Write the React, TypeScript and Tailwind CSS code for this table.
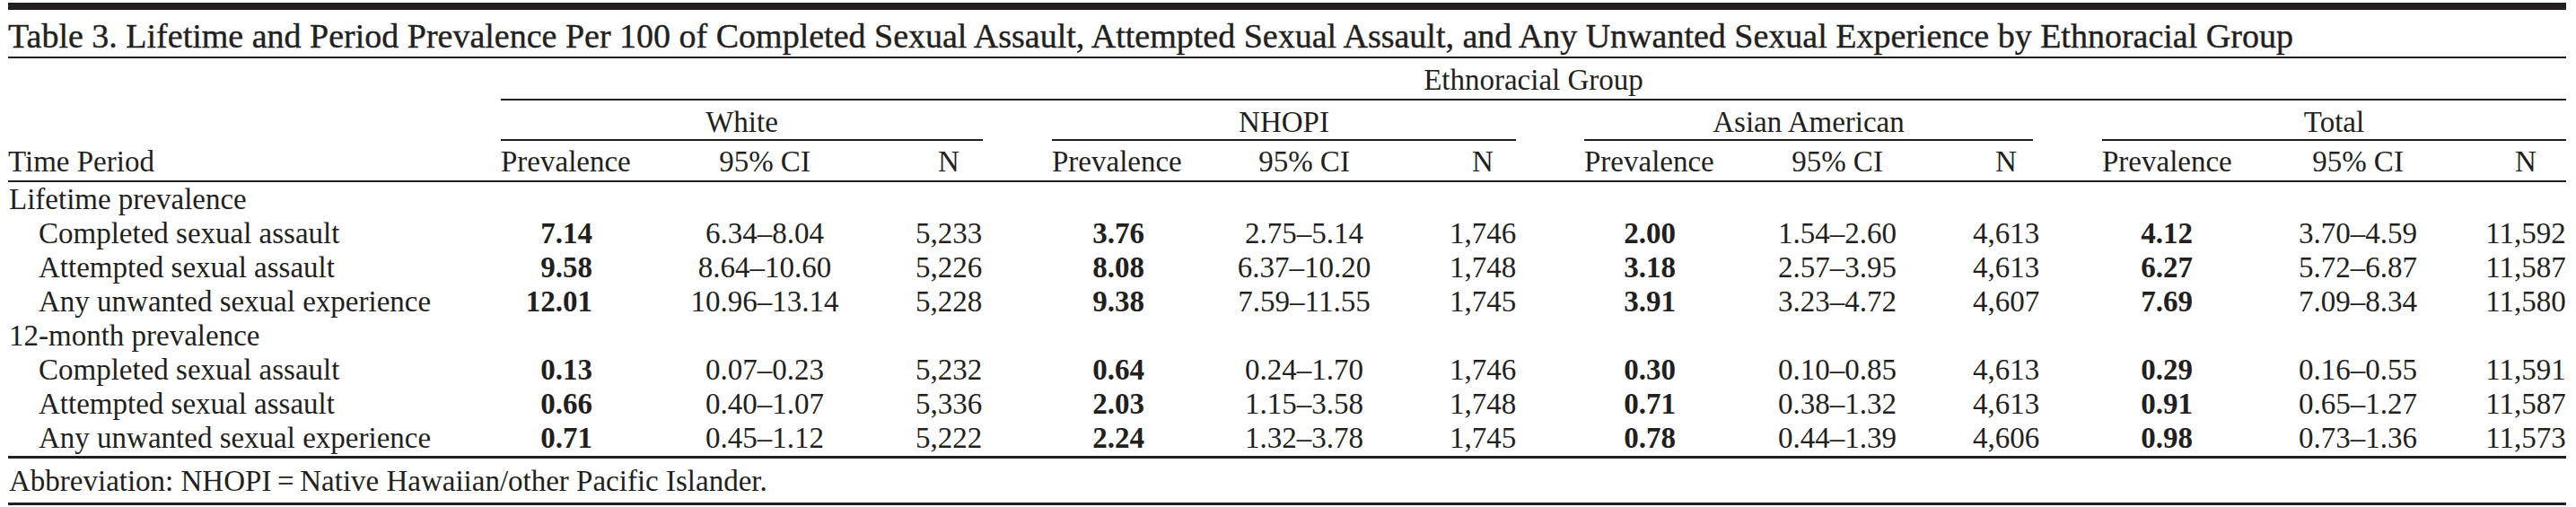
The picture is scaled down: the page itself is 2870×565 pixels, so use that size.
import React from "react";

type Triple = [string, string, string];
type Row = { label: string; section?: boolean; v?: Triple[] };

const rows: Row[] = [
  { label: "Lifetime prevalence", section: true },
  {
    label: "Completed sexual assault",
    v: [
      ["7.14", "6.34–8.04", "5,233"],
      ["3.76", "2.75–5.14", "1,746"],
      ["2.00", "1.54–2.60", "4,613"],
      ["4.12", "3.70–4.59", "11,592"],
    ],
  },
  {
    label: "Attempted sexual assault",
    v: [
      ["9.58", "8.64–10.60", "5,226"],
      ["8.08", "6.37–10.20", "1,748"],
      ["3.18", "2.57–3.95", "4,613"],
      ["6.27", "5.72–6.87", "11,587"],
    ],
  },
  {
    label: "Any unwanted sexual experience",
    v: [
      ["12.01", "10.96–13.14", "5,228"],
      ["9.38", "7.59–11.55", "1,745"],
      ["3.91", "3.23–4.72", "4,607"],
      ["7.69", "7.09–8.34", "11,580"],
    ],
  },
  { label: "12-month prevalence", section: true },
  {
    label: "Completed sexual assault",
    v: [
      ["0.13", "0.07–0.23", "5,232"],
      ["0.64", "0.24–1.70", "1,746"],
      ["0.30", "0.10–0.85", "4,613"],
      ["0.29", "0.16–0.55", "11,591"],
    ],
  },
  {
    label: "Attempted sexual assault",
    v: [
      ["0.66", "0.40–1.07", "5,336"],
      ["2.03", "1.15–3.58", "1,748"],
      ["0.71", "0.38–1.32", "4,613"],
      ["0.91", "0.65–1.27", "11,587"],
    ],
  },
  {
    label: "Any unwanted sexual experience",
    v: [
      ["0.71", "0.45–1.12", "5,222"],
      ["2.24", "1.32–3.78", "1,745"],
      ["0.78", "0.44–1.39", "4,606"],
      ["0.98", "0.73–1.36", "11,573"],
    ],
  },
];

const groups = ["White", "NHOPI", "Asian American", "Total"];
const prevPad = ["pr-[25px]", "pr-[16px]", "pr-[22px]", "pr-[42px]"];

const GRID =
  "grid grid-cols-[549px_127px_334px_76px_77px_119px_324px_74px_76px_124px_316px_60px_77px_143px_284px_90px]";

const cell = "whitespace-nowrap leading-[38px]";

export default function App() {
  return (
    <div className="min-h-[565px] w-[2870px] bg-white pl-[9px] font-['Liberation_Serif',serif] text-[33px] text-[#231f20]">
      <div className="w-[2850px]">
        <div className="mt-[3px] h-[8px] bg-[#231f20]" />
        <div className="border-b-2 border-[#231f20] pt-[7px] pb-[1px]">
          <h1 className="whitespace-nowrap text-[38px] leading-[44px] font-normal [-webkit-text-stroke:0.4px_#231f20]">
            Table 3. Lifetime and Period Prevalence Per 100 of Completed Sexual Assault, Attempted Sexual Assault, and Any Unwanted Sexual Experience by Ethnoracial Group
          </h1>
        </div>

        {/* Header row A */}
        <div className={GRID}>
          <div />
          <div className={`col-span-15 border-b-2 border-[#231f20] pt-[5px] pb-[2px] text-center ${cell}`}>
            Ethnoracial Group
          </div>
        </div>

        {/* Header row B */}
        <div className={GRID}>
          <div />
          {groups.map((g, i) => (
            <React.Fragment key={g}>
              {i > 0 && <div />}
              <div className={`col-span-3 border-b-2 border-[#231f20] pt-[5px] text-center ${cell}`}>{g}</div>
            </React.Fragment>
          ))}
        </div>

        {/* Header row C */}
        <div className={`${GRID} border-b-2 border-[#231f20] pt-[4px] pb-[2px]`}>
          <div className={cell}>Time Period</div>
          {groups.map((g, i) => (
            <React.Fragment key={g}>
              {i > 0 && <div />}
              <div className={`text-left ${cell}`}>Prevalence</div>
              <div className={`text-center ${cell}`}>95% CI</div>
              <div className={`flex justify-center ${cell}`}>N</div>
            </React.Fragment>
          ))}
        </div>

        {/* Body */}
        <div className="pb-[1px]">
          {rows.map((r, ri) => (
            <div key={ri} className={GRID}>
              <div className={`${cell} ${r.section ? "pl-[1px]" : "pl-[34px]"}`}>{r.label}</div>
              {r.v &&
                r.v.map((t, i) => (
                  <React.Fragment key={i}>
                    {i > 0 && <div />}
                    <div className={`text-right font-bold ${prevPad[i]} ${cell}`}>{t[0]}</div>
                    <div className={`flex justify-center ${cell}`}>{t[1]}</div>
                    <div className={`flex justify-center ${cell}`}>{t[2]}</div>
                  </React.Fragment>
                ))}
            </div>
          ))}
        </div>
        <div className="h-[3px] bg-[#231f20]" />

        {/* Footer */}
        <div className={`pt-[6px] pb-[5px] pl-[1px] ${cell}`}>
          Abbreviation: NHOPI{"\u2009"}={"\u2009"}Native Hawaiian/other Pacific Islander.
        </div>
        <div className="h-[3px] bg-[#231f20]" />
      </div>
    </div>
  );
}
